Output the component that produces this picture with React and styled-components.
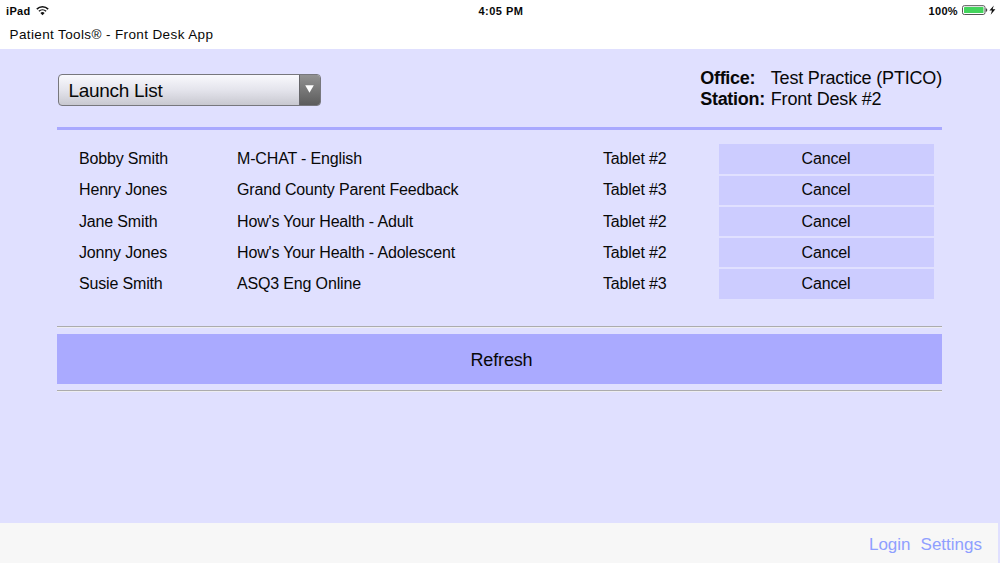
import styled, { createGlobalStyle } from 'styled-components';

const launches = [
  { name: 'Bobby Smith', form: 'M-CHAT - English', tablet: 'Tablet #2' },
  { name: 'Henry Jones', form: 'Grand County Parent Feedback', tablet: 'Tablet #3' },
  { name: 'Jane Smith', form: "How's Your Health - Adult", tablet: 'Tablet #2' },
  { name: 'Jonny Jones', form: "How's Your Health - Adolescent", tablet: 'Tablet #2' },
  { name: 'Susie Smith', form: 'ASQ3 Eng Online', tablet: 'Tablet #3' },
];

const App = () => {
  return (
    <>
      <GlobalStyle />
      <Screen>
        <StatusBar>
          <StatusSide>
            <span>iPad</span>
            <WifiIcon />
          </StatusSide>
          <Clock>4:05 PM</Clock>
          <StatusSide $end>
            <span>100%</span>
            <BatteryIcon />
          </StatusSide>
        </StatusBar>
        <TitleBar>Patient Tools® - Front Desk App</TitleBar>

        <Main>
          <Header>
            <Select type="button">
              <SelectLabel>Launch List</SelectLabel>
              <SelectArrow>
                <svg width="9" height="8" viewBox="0 0 9 8">
                  <path d="M0.2 0.3H8.8L4.5 7.8Z" fill="#fff" />
                </svg>
              </SelectArrow>
            </Select>
            <Info>
              <dt>Office:</dt>
              <dd>Test Practice (PTICO)</dd>
              <dt>Station:</dt>
              <dd>Front Desk #2</dd>
            </Info>
          </Header>

          <LaunchList>
            {launches.map(({ name, form, tablet }) => (
              <LaunchRow key={name}>
                <span>{name}</span>
                <span>{form}</span>
                <span>{tablet}</span>
                <CancelButton type="button">Cancel</CancelButton>
              </LaunchRow>
            ))}
          </LaunchList>

          <Rule />
          <RefreshButton type="button">Refresh</RefreshButton>
          <Rule />
        </Main>

        <Footer>
          <FooterLink href="#login">Login</FooterLink>
          <FooterLink href="#settings">Settings</FooterLink>
        </Footer>
      </Screen>
    </>
  );
};

export default App;

const WifiIcon = () => (
  <svg width="13" height="10" viewBox="0 0 13 10" fill="none" stroke="#111">
    <path d="M0.8 3.1A8.2 8.2 0 0 1 12.2 3.1" strokeWidth="1.5" />
    <path d="M2.9 5.3A5.2 5.2 0 0 1 10.1 5.3" strokeWidth="1.4" />
    <path d="M6.5 9.2L4.4 7A2.9 2.9 0 0 1 8.6 7Z" fill="#111" stroke="none" />
  </svg>
);

const BatteryIcon = () => (
  <svg width="34" height="11" viewBox="0 0 34 11">
    <rect x="0.5" y="0.7" width="22.5" height="8.8" rx="1.8" fill="#fff" stroke="#555" />
    <rect x="2" y="2.1" width="19.5" height="6" rx="0.6" fill="#43d45c" />
    <path d="M23.8 3.3Q25.3 3.6 25.3 5.1T23.8 6.9Z" fill="#444" />
    <path d="M31.8 0.4L27.4 5.6H30L28.7 9.8L33.4 4.3H30.6Z" fill="#111" />
  </svg>
);

const GlobalStyle = createGlobalStyle`
  * {
    box-sizing: border-box;
  }

  body {
    margin: 0;
    overflow: hidden;
    background-color: #e0e0ff;
    color: #080808;
    font-family: 'Liberation Sans', Arial, sans-serif;
  }

  button {
    margin: 0;
    padding: 0;
    border: none;
    color: inherit;
    font-family: inherit;
  }
`;

const Screen = styled.div`
  display: flex;
  flex-direction: column;
  width: 1000px;
  height: 563px;
`;

const StatusBar = styled.div`
  display: grid;
  grid-template-columns: 1fr auto 1fr;
  align-items: center;
  height: 21px;
  padding: 0 4px 0 6px;
  background-color: #fff;
  font-size: 11px;
  font-weight: bold;
`;

const StatusSide = styled.div`
  display: flex;
  align-items: center;
  justify-content: ${props => (props.$end ? 'flex-end' : 'flex-start')};
  gap: ${props => (props.$end ? '4px' : '5px')};
  letter-spacing: 0.35px;
`;

const Clock = styled.span`
  letter-spacing: 0.5px;
`;

const TitleBar = styled.div`
  height: 28px;
  padding-left: 9.5px;
  background-color: #fff;
  font-size: 13.5px;
  line-height: 27px;
  letter-spacing: 0.38px;
`;

const Main = styled.main`
  flex: 1;
  padding: 0 58px 0 57px;
`;

const Header = styled.header`
  display: flex;
  justify-content: space-between;
  height: 81px;
  padding: 18px 0 0 1px;
  border-bottom: 3px solid #a9a9ff;
`;

const Select = styled.button`
  display: flex;
  width: 263px;
  height: 32px;
  margin-top: 7px;
  overflow: hidden;
  border: 1px solid #77777d;
  border-radius: 4px;
  background: linear-gradient(#f9f9fd, #e4e4ec 50%, #c8c8d0);
  text-align: left;
`;

const SelectLabel = styled.span`
  flex: 1;
  padding-left: 9.5px;
  font-size: 19px;
  line-height: 31px;
  letter-spacing: -0.3px;
`;

const SelectArrow = styled.span`
  display: flex;
  justify-content: center;
  width: 21px;
  height: 100%;
  padding: 10px 2px 0 0;
  border-left: 1px solid #66666a;
  background: linear-gradient(#929292, #5c5c5c);
`;

const Info = styled.dl`
  display: grid;
  grid-template-columns: 70.5px auto;
  grid-auto-rows: 21px;
  margin: 0;
  font-size: 18px;
  line-height: 22px;
  letter-spacing: -0.18px;
  white-space: nowrap;

  dt {
    font-weight: bold;
    letter-spacing: -0.3px;
  }

  dd {
    margin: 0;
  }
`;

const LaunchList = styled.div`
  display: grid;
  grid-auto-rows: 30px;
  row-gap: 1.25px;
  padding: 14px 8.5px 0 22px;
  margin-bottom: 27px;
`;

const LaunchRow = styled.div`
  display: grid;
  grid-template-columns: 158px 366px 1fr 215px;
  align-items: center;
  font-size: 16px;
  letter-spacing: -0.16px;
`;

const CancelButton = styled.button`
  height: 29.25px;
  background-color: #ccccff;
  font-size: 16px;
  letter-spacing: -0.15px;
`;

const Rule = styled.hr`
  height: 2px;
  margin: 0;
  border: none;
  border-top: 1px solid #acacae;
  border-bottom: 1px solid #ededf2;
`;

const RefreshButton = styled.button`
  display: block;
  width: 100%;
  height: 50px;
  margin: 6px 0 6px;
  padding: 3px 0 0 4px;
  background-color: #aaaaff;
  font-size: 18px;
  letter-spacing: -0.15px;
`;

const Footer = styled.footer`
  display: flex;
  align-items: center;
  justify-content: flex-end;
  gap: 10px;
  width: 998px;
  height: 40px;
  padding: 3px 16px 0 0;
  background-color: #f7f7f7;
`;

const FooterLink = styled.a`
  color: #8f9fff;
  font-size: 17px;
  text-decoration: none;
`;
